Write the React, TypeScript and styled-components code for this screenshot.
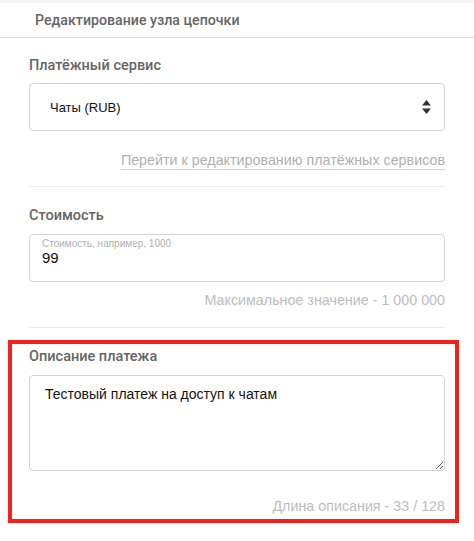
import styled, { createGlobalStyle } from "styled-components";

const GlobalStyle = createGlobalStyle`
  html, body {
    margin: 0;
    padding: 0;
    background: #fff;
  }
  body {
    font-family: "Liberation Sans", "Noto Sans", sans-serif;
    color: #1a1a1a;
  }
  * {
    box-sizing: border-box;
  }
`;

const SortArrows = () => (
  <svg width="9" height="14" viewBox="0 0 9 14" fill="#333">
    <path d="M4.5 0 L9 5.5 H0 Z" />
    <path d="M0 8.5 H9 L4.5 14 Z" />
  </svg>
);

const App = () => {
  return (
    <Page>
      <GlobalStyle />
      <TopStrip />
      <Header>Редактирование узла цепочки</Header>

      <Section>
        <Label>Платёжный сервис</Label>
        <SelectBox>
          <span>Чаты (RUB)</span>
          <SortArrows />
        </SelectBox>
        <Helper>
          <HelperLink href="#">Перейти к редактированию платёжных сервисов</HelperLink>
        </Helper>
        <Divider />
      </Section>

      <Section>
        <Label $top={19}>Стоимость</Label>
        <InputBox>
          <FloatLabel>Стоимость, например, 1000</FloatLabel>
          <InputValue>99</InputValue>
        </InputBox>
        <Helper $top={10}>Максимальное значение - 1 000 000</Helper>
        <Divider $top={19} />
      </Section>

      <Highlight>
        <Label $top={3}>Описание платежа</Label>
        <TextArea defaultValue="Тестовый платеж на доступ к чатам" />
        <Helper $top={27}>Длина описания - 33 / 128</Helper>
      </Highlight>
    </Page>
  );
};

const Page = styled.div`
  width: 474px;
  min-height: 541px;
  background: #fff;
`;

const TopStrip = styled.div`
  height: 3px;
  background: #f4f4f4;
`;

const Header = styled.div`
  height: 35px;
  padding-left: 35px;
  display: flex;
  align-items: center;
  border-bottom: 1px solid #dcdcdc;
  font-family: Roboto, "Liberation Sans", sans-serif;
  font-size: 14.2px;
  font-weight: 500;
  color: #666;
`;

const Section = styled.section`
  padding: 0 29px;
`;

const Label = styled.div<{ $top?: number }>`
  padding-top: ${({ $top }) => $top ?? 18}px;
  line-height: 20px;
  font-family: Roboto, "Liberation Sans", sans-serif;
  font-size: 14.5px;
  font-weight: 500;
  color: #666;
`;

const SelectBox = styled.div`
  margin-top: 7px;
  height: 48px;
  display: flex;
  align-items: center;
  justify-content: space-between;
  padding: 0 13px 0 20px;
  border: 1px solid #d4d4d4;
  border-radius: 4px;
  font-size: 13px;
  color: #111;
`;

const Helper = styled.div<{ $top?: number }>`
  margin-top: ${({ $top }) => $top ?? 21}px;
  line-height: 16px;
  text-align: right;
  font-size: 14.3px;
  color: #bdbdbd;
`;

const HelperLink = styled.a`
  color: #b0b0b0;
  text-decoration: underline;
  text-decoration-color: #d0d0d0;
  text-underline-offset: 4px;
`;

const Divider = styled.hr<{ $top?: number }>`
  margin: ${({ $top }) => $top ?? 18}px 0 0;
  border: 0;
  border-top: 1px solid #ececec;
`;

const InputBox = styled.div`
  margin-top: 8px;
  height: 48px;
  padding: 3px 12px 0;
  border: 1px solid #d4d4d4;
  border-radius: 4px;
`;

const FloatLabel = styled.div`
  font-size: 10px;
  line-height: 12px;
  color: #b0b0b0;
`;

const InputValue = styled.div`
  font-size: 15px;
  line-height: 16px;
  color: #111;
`;

const Highlight = styled.section`
  margin: 12px 15px 0 8px;
  padding: 0 10px 5px 17px;
  border: 4px solid #f2231d;
`;

const TextArea = styled.textarea`
  display: block;
  margin-top: 8px;
  width: 100%;
  height: 96px;
  padding: 10px 15px;
  border: 1px solid #d4d4d4;
  border-radius: 4px;
  font-family: "Liberation Sans", "Noto Sans", sans-serif;
  font-size: 14px;
  color: #111;
  resize: vertical;
  outline: none;
`;

export default App;
